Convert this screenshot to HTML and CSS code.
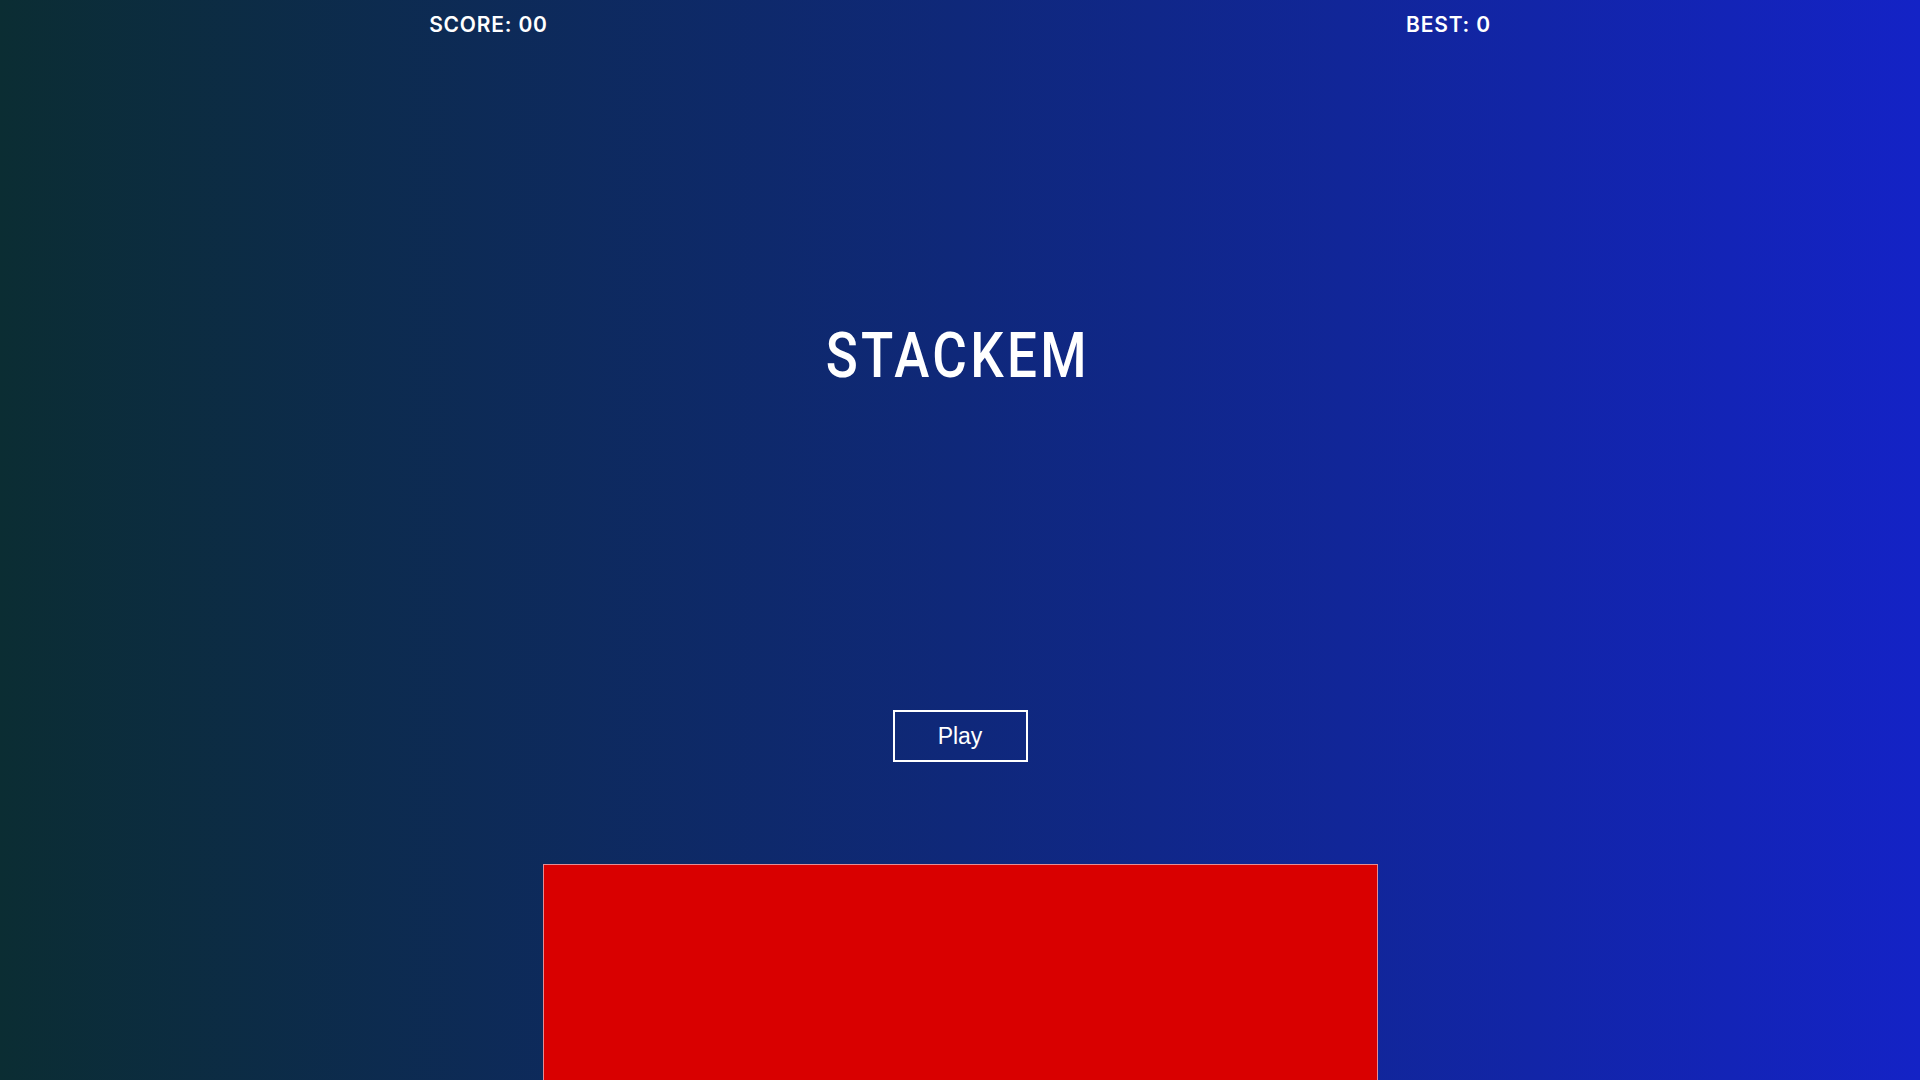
FILE: index.html
```html
<!DOCTYPE html>
<html lang="en">
<head>
<meta charset="utf-8">
<title>Stackem</title>
<link rel="stylesheet" href="styles.css">
</head>
<body>
<div class="page">
  <header class="scorebar">
    <div class="score">SCORE: 00</div>
    <div class="score">BEST: 0</div>
  </header>
  <main class="stage">
    <h1 class="title">STACKEM</h1>
    <button class="play" type="button">Play</button>
    <div class="block"></div>
  </main>
</div>
</body>
</html>
```
FILE: styles.css
```css
html, body {
  margin: 0;
  padding: 0;
  height: 100%;
}
body {
  overflow: hidden;
  background: linear-gradient(to right, #0b2d33 0%, #0f287a 50%, #1423c6 100%);
  color: #fff;
}
.page {
  height: 100vh;
  display: flex;
  flex-direction: column;
}
.scorebar {
  display: flex;
  justify-content: space-around;
  padding-top: 14px;
}
.score {
  font-family: Inter, "Open Sans", sans-serif;
  font-weight: 600;
  font-size: 21px;
  line-height: 1;
  letter-spacing: 0.8px;
}
.stage {
  display: flex;
  flex-direction: column;
  align-items: center;
}
.title {
  margin: 289px 0 0 0;
  font-family: Roboto, "DejaVu Sans", sans-serif;
  font-weight: 500;
  font-size: 63px;
  line-height: 1;
  letter-spacing: 4px;
  padding-right: 6px;
  transform: scaleX(0.84);
}
.play {
  margin-top: 323px;
  width: 135px;
  height: 52px;
  background: transparent;
  border: 2px solid #fff;
  color: #fff;
  font-family: "Liberation Sans", Arial, sans-serif;
  font-size: 23px;
  padding: 0;
}
.block {
  margin-top: 102px;
  width: 835px;
  height: 300px;
  box-sizing: border-box;
  background: #d90000;
  border: 1px solid rgba(230, 200, 210, 0.7);
}
```
